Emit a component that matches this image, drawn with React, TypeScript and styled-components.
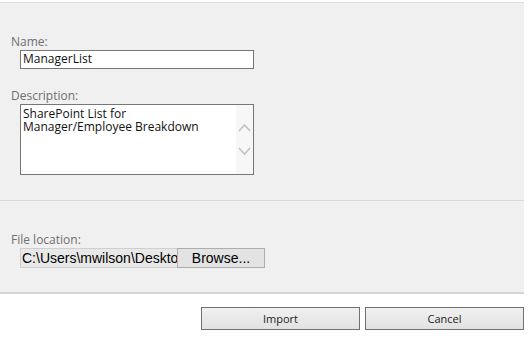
import * as React from "react";
import styled, { createGlobalStyle } from "styled-components";

const Global = createGlobalStyle`
	html, body { margin: 0; padding: 0; background: #fff; }
	* { box-sizing: border-box; }
	body { font-family: "Open Sans", "Noto Sans", sans-serif; font-size: 12px; }
`;

const Page = styled.div`
	width: 532px;
	height: 340px;
	padding-top: 2px;
	background: #fff;
`;

const Panel = styled.div`
	width: 524px;
	background: #f0f0f0;
	border-top: 1px solid #dedede;
	border-bottom: 2px solid #d6d6d6;
`;

const Section = styled.div<{ $h: number; $top: number; $divider?: boolean }>`
	height: ${(p) => p.$h}px;
	padding: ${(p) => p.$top}px 0 0 11px;
	border-top: ${(p) => (p.$divider ? "1px solid #dadada" : "none")};
	display: flex;
	flex-direction: column;
`;

const Label = styled.div<{ $gap?: number }>`
	color: #6f6f6f;
	line-height: 15px;
	margin-top: ${(p) => p.$gap || 0}px;
	margin-bottom: 1px;
`;

const Field = styled.div`
	margin-left: 9px;
	width: 234px;
	background: #fff;
	border: 1px solid #767676;
	color: #111;
`;

const TextInput = styled(Field)`
	height: 19px;
	padding: 0 2px;
	line-height: 16px;
`;

const TextArea = styled(Field)`
	height: 71px;
	display: flex;
`;

const AreaText = styled.div`
	flex: 1;
	padding: 2px 2px;
	line-height: 13px;
`;

const Line = styled.div`
	height: 13px;
	white-space: nowrap;
`;

const ScrollStrip = styled.div`
	width: 17px;
	background: #f7f7f7;
	display: flex;
	flex-direction: column;
	align-items: center;
	padding-top: 18px;
	gap: 15px;
`;

const Chevron = ({ up }: { up?: boolean }) => (
	<svg width="13" height="9" viewBox="0 0 13 9">
		<path
			d={up ? "M1 8 L6.5 2 L12 8" : "M1 1 L6.5 7 L12 1"}
			fill="none"
			stroke="#c4c4c4"
			strokeWidth="1.7"
		/>
	</svg>
);

const FileRow = styled.div`
	margin-left: 9px;
	display: flex;
	height: 20px;
	font-family: "Liberation Sans", Arial, sans-serif;
	font-size: 14px;
	color: #000;
`;

const FilePath = styled.div`
	width: 157px;
	background: #e8e8e8;
	border: 1px solid #cfcfcf;
	border-right: none;
	padding-left: 1px;
	line-height: 18px;
	white-space: nowrap;
`;

const BrowseButton = styled.div`
	width: 88px;
	background: #e3e3e3;
	border: 1px solid #adadad;
	text-align: center;
	line-height: 18px;
`;

const Footer = styled.div`
	width: 524px;
	display: flex;
	justify-content: flex-end;
	gap: 5px;
	padding-top: 13px;
`;

const Button = styled.div`
	width: 159px;
	height: 23px;
	border: 1px solid #707070;
	background: linear-gradient(#f0f0f0, #e2e2e2);
	color: #222;
	font-size: 11px;
	text-align: center;
	line-height: 21px;
`;

export default function App() {
	return (
		<Page>
			<Global />
			<Panel>
				<Section $h={197} $top={31}>
					<Label>Name:</Label>
					<TextInput>ManagerList</TextInput>
					<Label $gap={19}>Description:</Label>
					<TextArea>
						<AreaText>
							<Line>SharePoint List for</Line>
							<Line>Manager/Employee Breakdown</Line>
						</AreaText>
						<ScrollStrip>
							<Chevron up />
							<Chevron />
						</ScrollStrip>
					</TextArea>
				</Section>
				<Section $h={92} $top={31} $divider>
					<Label>File location:</Label>
					<FileRow>
						<FilePath>C:\Users\mwilson\Deskto</FilePath>
						<BrowseButton>Browse...</BrowseButton>
					</FileRow>
				</Section>
			</Panel>
			<Footer>
				<Button>Import</Button>
				<Button>Cancel</Button>
			</Footer>
		</Page>
	);
}
